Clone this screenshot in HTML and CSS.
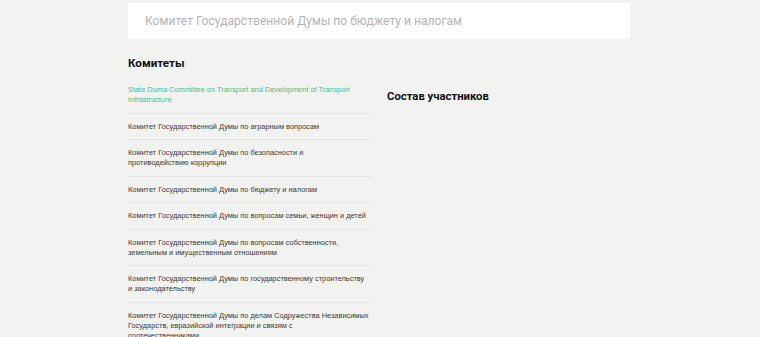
FILE: index.html
```html
<!DOCTYPE html>
<html lang="ru">
<head>
<meta charset="utf-8">
<link rel="stylesheet" href="styles.css">
</head>
<body>
<div class="page">
  <div class="search">Комитет Государственной Думы по бюджету и налогам</div>
  <div class="columns">
    <div class="left">
      <h2 class="title">Комитеты</h2>
      <ul class="list">
        <li class="item active">State Duma Committee on Transport and Development of Transport Infrastructure</li>
        <li class="item">Комитет Государственной Думы по аграрным вопросам</li>
        <li class="item">Комитет Государственной Думы по безопасности и<br>противодействию коррупции</li>
        <li class="item">Комитет Государственной Думы по бюджету и налогам</li>
        <li class="item">Комитет Государственной Думы по вопросам семьи, женщин и детей</li>
        <li class="item">Комитет Государственной Думы по вопросам собственности, земельным и имущественным отношениям</li>
        <li class="item">Комитет Государственной Думы по государственному строительству<br>и законодательству</li>
        <li class="item">Комитет Государственной Думы по делам Содружества Независимых<br>Государств, евразийской интеграции и связям с<br>соотечественниками</li>
      </ul>
    </div>
    <div class="right">
      <h2 class="title">Состав участников</h2>
    </div>
  </div>
</div>
</body>
</html>
```
FILE: styles.css
```css
html, body {
  margin: 0;
  padding: 0;
  background: #f2f2f0;
  font-family: Roboto, "Liberation Sans", sans-serif;
  overflow: hidden;
}
.page {
  width: 502px;
  margin: 0 auto;
  padding-top: 3px;
  position: relative;
  left: -1px;
}
.search {
  background: #ffffff;
  height: 36px;
  line-height: 36px;
  padding-left: 17px;
  font-size: 12.1px;
  color: #b5b5b5;
}
.columns {
  display: flex;
  gap: 16px;
}
.left {
  width: 243px;
}
.title {
  margin: 0;
  font-size: 11.6px;
  font-weight: 700;
  color: #111;
  line-height: 16px;
}
.right .title {
  font-size: 11.3px;
  margin-top: 50px;
}
.left .title {
  margin-top: 16px;
  margin-bottom: 14px;
}
.list {
  list-style: none;
  margin: 0;
  padding: 0;
}
.item {
  font-family: "Liberation Sans", Arial, sans-serif;
  font-size: 7.4px;
  line-height: 10px;
  color: #3a3a3a;
  padding: 8px 0 7.5px;
  border-bottom: 1px solid #e6e6e4;
}
.item:first-child {
  padding-top: 0;
}
.item.active {
  color: #3fc487;
}
```
